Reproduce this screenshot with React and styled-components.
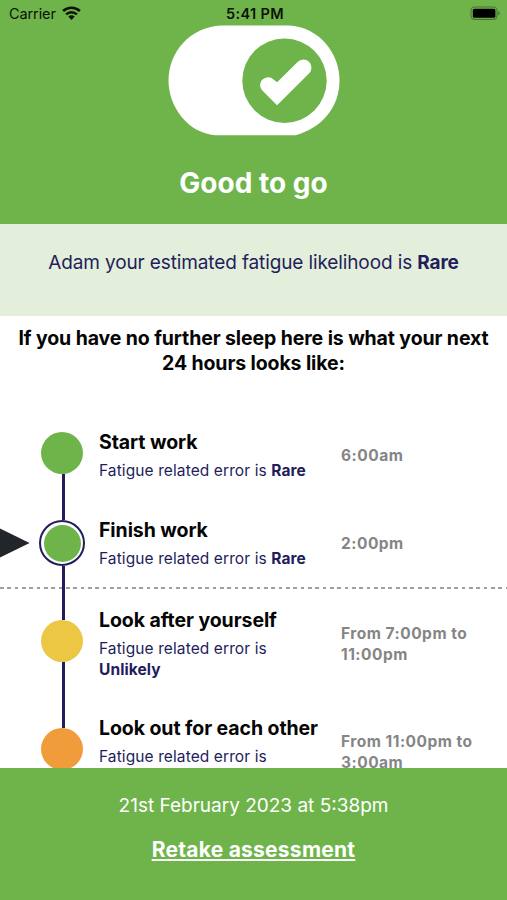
import styled, { createGlobalStyle } from "styled-components";

const GREEN = "#6fb44a";
const NAVY = "#241d5c";

const steps = [
    {
        title: "Start work",
        risk: "Rare",
        time: "6:00am",
        color: GREEN,
        height: 88,
    },
    {
        title: "Finish work",
        risk: "Rare",
        time: "2:00pm",
        color: GREEN,
        height: 90,
        current: true,
    },
    {
        title: "Look after yourself",
        risk: "Unlikely",
        time: "From 7:00pm to 11:00pm",
        color: "#ebc744",
        height: 108,
    },
    {
        title: "Look out for each other",
        risk: "Possible",
        time: "From 11:00pm to 3:00am",
        color: "#f19c3b",
        height: 108,
    },
];

const WifiIcon = () => (
    <svg width="19" height="15" viewBox="0 0 19 15">
        <path
            d="M1.1 5C5.8.5 13.2.5 17.9 5M4.1 8.3c3.1-2.9 7.7-2.9 10.8 0"
            fill="none"
            stroke="#0b1206"
            strokeWidth="2.5"
        />
        <path d="M6.3 10.5c1.8-1.6 4.6-1.6 6.4 0L9.5 13.9z" fill="#0b1206" />
    </svg>
);

const BatteryIcon = () => (
    <svg width="31" height="15" viewBox="0 0 31 15">
        <rect
            x="1"
            y="1"
            width="26"
            height="12.4"
            rx="3.6"
            fill="none"
            stroke="#487530"
            strokeWidth="1.1"
        />
        <rect x="2.8" y="2.8" width="22.6" height="9" rx="1.6" fill="#000" />
        <path d="M28.4 5.2c2 .8 2 3.2 0 4z" fill="#487530" />
    </svg>
);

const ToggleIcon = () => (
    <svg width="172" height="111" viewBox="0 0 172 111">
        <path
            d="M53 .5H121C151 2 171.5 28 171.5 55.5C171.5 82 154 103 127.5 110.2H47C20 108 .5 82 .5 55.5C.5 27 22 2 53 .5Z"
            fill="#fff"
        />
        <circle cx="116.5" cy="55.7" r="42.2" fill={GREEN} />
        <path
            d="M92.1 60.2a8 8 0 0 1 13.7-5.5L109.1 57.3L129.6 37a8 8 0 0 1 11.6 11.3L109.1 80.2L94.3 65.6a8 8 0 0 1-2.2-5.4Z"
            fill="#fff"
        />
    </svg>
);

const Step = ({ title, risk, time, color, height, current, first }) => (
    <StepRow $height={height}>
        {current && (
            <Pointer width="30" height="30" viewBox="0 0 30 30">
                <path d="M0 .4L29.6 15L0 29.6Z" fill="#22252a" />
            </Pointer>
        )}
        <Track>
            <TrackLine $hidden={first} $basis={current ? 2 : 0} />
            {current ? (
                <Ring>
                    <Dot $size={37} $color={color} />
                </Ring>
            ) : (
                <Dot $size={42} $color={color} />
            )}
            <TrackLine />
        </Track>
        <StepText>
            <StepTitle>{title}</StepTitle>
            <StepRisk>
                Fatigue related error is <b>{risk}</b>
            </StepRisk>
        </StepText>
        <StepTime>{time}</StepTime>
        {current && <NowLine />}
    </StepRow>
);

export default function App() {
    return (
        <Screen>
            <GlobalStyle />
            <Header>
                <StatusBar>
                    <Carrier>
                        Carrier
                        <WifiIcon />
                    </Carrier>
                    <Clock>5:41 PM</Clock>
                    <Battery>
                        <BatteryIcon />
                    </Battery>
                </StatusBar>
                <ToggleIcon />
                <Result>Good to go</Result>
            </Header>
            <Likelihood>
                <span>
                    Adam your estimated fatigue likelihood is <b>Rare</b>
                </span>
            </Likelihood>
            <Timeline>
                <TimelineTitle>
                    If you have no further sleep here is what your next
                    <br />
                    24 hours looks like:
                </TimelineTitle>
                {steps.map((step, index) => (
                    <Step key={step.title} first={index === 0} {...step} />
                ))}
            </Timeline>
            <Footer>
                <Timestamp>21st February 2023 at 5:38pm</Timestamp>
                <Retake>Retake assessment</Retake>
            </Footer>
        </Screen>
    );
}

const GlobalStyle = createGlobalStyle`
    * {
        box-sizing: border-box;
    }

    body {
        margin: 0;
        font-family: Inter, "Liberation Sans", sans-serif;
    }
`;

const Screen = styled.div`
    width: 507px;
    height: 900px;
    display: flex;
    flex-direction: column;
    overflow: hidden;
    background-color: #ffffff;
`;

const Header = styled.header`
    height: 224px;
    flex-shrink: 0;
    display: flex;
    flex-direction: column;
    align-items: center;
    background-color: ${GREEN};

    svg {
        flex-shrink: 0;
    }
`;

const StatusBar = styled.div`
    width: 100%;
    height: 25px;
    padding: 3px 6px 0 9px;
    display: grid;
    grid-template-columns: 1fr auto 1fr;
    align-items: center;
    font-size: 14.5px;
    line-height: 20px;
    color: #0b1206;
`;

const Carrier = styled.div`
    display: flex;
    align-items: center;
    gap: 6px;
    letter-spacing: -0.1px;

    svg {
        margin-bottom: 2px;
    }
`;

const Clock = styled.div`
    font-weight: 600;
    letter-spacing: 0.35px;
`;

const Battery = styled.div`
    display: flex;
    justify-content: flex-end;

    svg {
        margin-bottom: 2px;
    }
`;

const Result = styled.h1`
    margin: 29px 0 0;
    font-size: 28px;
    line-height: 36px;
    font-weight: 700;
    color: #ffffff;
`;

const Likelihood = styled.div`
    height: 92px;
    flex-shrink: 0;
    padding-top: 26px;
    text-align: center;
    font-size: 19px;
    line-height: 25px;
    letter-spacing: -0.12px;
    color: ${NAVY};
    background-color: #e3efdb;
    white-space: nowrap;
`;

const Timeline = styled.main`
    height: 452px;
    flex-shrink: 0;
    overflow: hidden;
`;

const TimelineTitle = styled.h2`
    height: 93px;
    margin: 0;
    padding-top: 10px;
    text-align: center;
    font-size: 19.5px;
    line-height: 24.5px;
    font-weight: 700;
    letter-spacing: -0.11px;
    color: #050505;
    white-space: nowrap;
`;

const StepRow = styled.div`
    position: relative;
    height: ${(props) => props.$height}px;
    padding-left: 38px;
    display: flex;
    align-items: stretch;
`;

const Track = styled.div`
    width: 48px;
    display: flex;
    flex-direction: column;
    align-items: center;
`;

const TrackLine = styled.div`
    flex: 1 1 ${(props) => props.$basis || 0}px;
    width: 3px;
    margin-left: 2px;
    background-color: ${(props) => (props.$hidden ? "transparent" : NAVY)};
`;

const Dot = styled.div`
    width: ${(props) => props.$size}px;
    height: ${(props) => props.$size}px;
    border-radius: 50%;
    background-color: ${(props) => props.$color};
`;

const Ring = styled.div`
    width: 46px;
    height: 46px;
    display: flex;
    align-items: center;
    justify-content: center;
    border: 2px solid ${NAVY};
    border-radius: 50%;
    background-color: #ffffff;
`;

const Pointer = styled.svg`
    position: absolute;
    left: 0;
    top: 31px;
`;

const NowLine = styled.div`
    position: absolute;
    left: 0;
    right: 0;
    bottom: -2px;
    height: 2px;
    background: repeating-linear-gradient(
        to right,
        #a0a0a0 0 3.7px,
        #ffffff 3.7px 7.33px
    );
`;

const StepText = styled.div`
    width: 242px;
    padding: 21px 0 0 13px;
`;

const StepTitle = styled.h3`
    margin: 0;
    font-size: 19.5px;
    line-height: 25px;
    font-weight: 700;
    letter-spacing: -0.08px;
    color: #050505;
    white-space: nowrap;
`;

const StepRisk = styled.p`
    width: 215px;
    margin: 6px 0 0;
    font-size: 15.5px;
    line-height: 20.5px;
    letter-spacing: 0.1px;
    color: ${NAVY};
`;

const StepTime = styled.div`
    width: 150px;
    margin-left: 13px;
    padding-top: 37px;
    font-size: 15.5px;
    line-height: 20.5px;
    font-weight: 700;
    letter-spacing: 0.5px;
    color: #858585;
`;

const Footer = styled.footer`
    height: 132px;
    flex-shrink: 0;
    padding-top: 25px;
    display: flex;
    flex-direction: column;
    align-items: center;
    color: #ffffff;
    background-color: ${GREEN};
`;

const Timestamp = styled.div`
    font-size: 19px;
    line-height: 25px;
`;

const Retake = styled.a`
    margin-top: 19px;
    font-size: 21px;
    line-height: 26px;
    font-weight: 700;
    letter-spacing: 0.25px;
    text-decoration: underline;
    cursor: pointer;
`;
